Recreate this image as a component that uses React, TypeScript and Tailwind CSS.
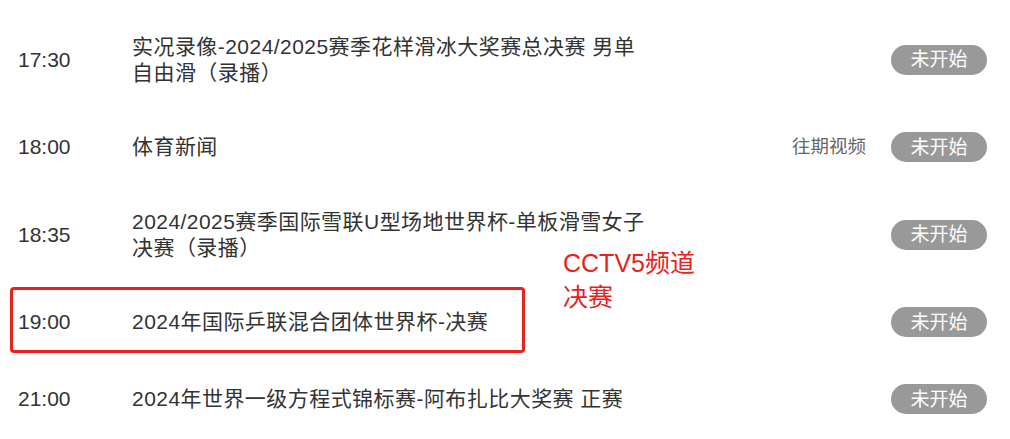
import React from "react";

type Row = { time: string; title: React.ReactNode; extra?: string; h: string };

const rows: Row[] = [
  {
    time: "17:30",
    title: (
      <>
        实况录像-2024/2025赛季花样滑冰大奖赛总决赛 男单
        <br />
        自由滑（录播）
      </>
    ),
    h: "h-[87.5px]",
  },
  { time: "18:00", title: "体育新闻", extra: "往期视频", h: "h-[87.5px]" },
  {
    time: "18:35",
    title: (
      <>
        2024/2025赛季国际雪联U型场地世界杯-单板滑雪女子
        <br />
        决赛（录播）
      </>
    ),
    h: "h-[87.5px]",
  },
  { time: "19:00", title: "2024年国际乒联混合团体世界杯-决赛", h: "h-[87.5px]" },
  { time: "21:00", title: "2024年世界一级方程式锦标赛-阿布扎比大奖赛 正赛", h: "h-[66px]" },
];

export default function App() {
  return (
    <div
      className="relative w-[1010px] h-[439px] overflow-hidden bg-white text-[#333]"
      style={{ fontFamily: '"Liberation Sans", "Noto Sans CJK SC", sans-serif' }}
    >
      <div className="pt-[16px] flex flex-col">
        {rows.map((r) => (
          <div key={r.time} className={`flex items-center ${r.h}`}>
            <div className="w-[132px] pl-[18px] text-[21px] leading-[26px] shrink-0">{r.time}</div>
            <div className="flex-1 text-[21px] leading-[26px] tracking-[0.45px] whitespace-nowrap">{r.title}</div>
            {r.extra && (
              <div className="text-[18.5px] text-[#666] mr-[25px] leading-[30px]">{r.extra}</div>
            )}
            <div className="w-[96px] h-[30px] mr-[23px] rounded-full bg-[#999] text-white text-[19px] flex items-center justify-center leading-none">
              未开始
            </div>
          </div>
        ))}
      </div>
      <div className="absolute left-[10px] top-[287px] w-[515px] h-[66px] border-[3px] border-[#e8221b] rounded-[4px]" />
      <div className="absolute left-[563px] top-[246px] text-[25px] leading-[34px] text-[#e8221b]">
        CCTV5频道
        <br />
        决赛
      </div>
    </div>
  );
}
